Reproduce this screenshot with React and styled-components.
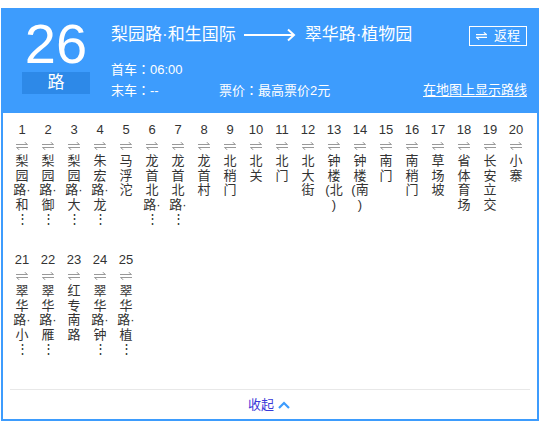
import React from 'react';
import styled, { createGlobalStyle } from 'styled-components';

const Global = createGlobalStyle`
  html, body { background: #fff; }
  body {
    margin: 8px 1px;
    font-family: "Liberation Sans", "Noto Sans CJK SC", sans-serif;
  }
`;

const Card = styled.div`
  box-sizing: border-box;
  width: 538px;
  height: 413px;
  border: 2px solid #3d9cfd;
  display: flex;
  flex-direction: column;
`;

const Header = styled.div`
  height: 103px;
  background: #3d9cfd;
  color: #fff;
  display: flex;
  padding: 6px 10px 0 19px;
  box-sizing: border-box;
`;

const NumBlock = styled.div`
  width: 68px;
  display: flex;
  flex-direction: column;
  align-items: center;
`;

const BigNum = styled.div`
  font-size: 56px;
  line-height: 48px;
  height: 48px;
  margin-top: 4px;
`;

const LuBox = styled.div`
  width: 68px;
  height: 22px;
  margin-top: 4px;
  background: #2d89e8;
  font-size: 17px;
  line-height: 22px;
  text-align: center;
`;

const Info = styled.div`
  flex: 1;
  margin-left: 21px;
  padding-top: 7px;
  display: flex;
  flex-direction: column;
`;

const TitleRow = styled.div`
  display: flex;
  align-items: center;
  height: 24px;
  font-size: 17px;
  line-height: 24px;
`;

const Arrow = styled.svg`
  margin: 0 9px 0 8px;
  display: block;
`;

const BackBtn = styled.div`
  margin-left: auto;
  width: 58px;
  height: 20px;
  box-sizing: border-box;
  border: 1px solid #fff;
  display: flex;
  align-items: center;
  justify-content: center;
  gap: 7px;
  font-size: 13px;
  line-height: 18px;
  margin-top: 2px;
`;

const MetaRow = styled.div`
  display: flex;
  align-items: center;
  height: 20px;
  font-size: 13px;
  line-height: 20px;
  margin-top: ${p => p.$top}px;
`;

const MetaCell = styled.span`
  width: ${p => (p.$w ? `${p.$w}px` : 'auto')};
  flex: none;
`;

const Colon = styled.span`
  font-family: "Noto Sans CJK TC", sans-serif;
`;

const MapLink = styled.a`
  margin-left: auto;
  color: #fff;
  text-decoration: underline;
  text-underline-offset: 2px;
  cursor: pointer;
`;

const StationList = styled.div`
  display: flex;
  flex-wrap: wrap;
  padding: 9px 0 7px 6px;
  align-content: flex-start;
  flex: 1;
`;

const Station = styled.div`
  width: 26px;
  height: 130px;
  display: flex;
  flex-direction: column;
  align-items: center;
  color: #333;
`;

const StationNo = styled.div`
  font-size: 13px;
  line-height: 15px;
  color: #333;
`;

const Swap = styled.svg`
  display: block;
  margin-top: 5px;
`;

const NameLines = styled.div`
  margin-top: 4px;
  display: flex;
  flex-direction: column;
  align-items: center;
`;

const NameLine = styled.div`
  font-size: 13px;
  line-height: 14.6px;
  white-space: nowrap;
  font-family: "Liberation Sans", "Noto Sans CJK SC", sans-serif;
`;

const Divider = styled.div`
  height: 1px;
  background: #e8e8e8;
  margin: 0 7px;
`;

const Footer = styled.div`
  height: 29px;
  display: flex;
  align-items: center;
  justify-content: center;
  gap: 4px;
  padding-right: 2px;
`;

const Collapse = styled.span`
  font-size: 13px;
  line-height: 18px;
  color: #3a3ad8;
  cursor: pointer;
`;

const SwapIcon = ({ color = '#999' }) => (
  <Swap width="12" height="8" viewBox="0 0 12 8">
    <path d="M0 2.5 H11.5 L8.5 0" fill="none" stroke={color} strokeWidth="1" />
    <path d="M12 5.5 H0.5 L3.5 8" fill="none" stroke={color} strokeWidth="1" />
  </Swap>
);

const stations = [
  ['梨', '园', '路·', '和', '⋮'],
  ['梨', '园', '路·', '御', '⋮'],
  ['梨', '园', '路·', '大', '⋮'],
  ['朱', '宏', '路·', '龙', '⋮'],
  ['马', '浮', '沱'],
  ['龙', '首', '北', '路·', '⋮'],
  ['龙', '首', '北', '路·', '⋮'],
  ['龙', '首', '村'],
  ['北', '稍', '门'],
  ['北', '关'],
  ['北', '门'],
  ['北', '大', '街'],
  ['钟', '楼', '(北', ')'],
  ['钟', '楼', '(南', ')'],
  ['南', '门'],
  ['南', '稍', '门'],
  ['草', '场', '坡'],
  ['省', '体', '育', '场'],
  ['长', '安', '立', '交'],
  ['小', '寨'],
  ['翠', '华', '路·', '小', '⋮'],
  ['翠', '华', '路·', '雁', '⋮'],
  ['红', '专', '南', '路'],
  ['翠', '华', '路·', '钟', '⋮'],
  ['翠', '华', '路·', '植', '⋮'],
];

export default function App() {
  return (
    <>
      <Global />
      <Card>
        <Header>
          <NumBlock>
            <BigNum>26</BigNum>
            <LuBox>路</LuBox>
          </NumBlock>
          <Info>
            <TitleRow>
              <span>梨园路·和生国际</span>
              <Arrow width="52" height="14" viewBox="0 0 52 14">
                <path d="M0 7 H50" stroke="#fff" strokeWidth="2" />
                <path d="M44 1.5 L50 7 L44 12.5" fill="none" stroke="#fff" strokeWidth="2" />
              </Arrow>
              <span>翠华路·植物园</span>
              <BackBtn>
                <svg width="11" height="8" viewBox="0 0 12 8" style={{ display: 'block' }}>
                  <path d="M0 2.5 H11.5 L8.5 0" fill="none" stroke="#fff" strokeWidth="1.2" />
                  <path d="M12 5.5 H0.5 L3.5 8" fill="none" stroke="#fff" strokeWidth="1.2" />
                </svg>
                <span>返程</span>
              </BackBtn>
            </TitleRow>
            <MetaRow $top={12}>
              <MetaCell>首车<Colon>：</Colon>06:00</MetaCell>
            </MetaRow>
            <MetaRow $top={1}>
              <MetaCell $w={108}>末车<Colon>：</Colon>--</MetaCell>
              <MetaCell>票价<Colon>：</Colon>最高票价2元</MetaCell>
              <MapLink>在地图上显示路线</MapLink>
            </MetaRow>
          </Info>
        </Header>
        <StationList>
          {stations.map((lines, i) => (
            <Station key={i}>
              <StationNo>{i + 1}</StationNo>
              <SwapIcon />
              <NameLines>
                {lines.map((l, j) => (
                  <NameLine key={j}>{l}</NameLine>
                ))}
              </NameLines>
            </Station>
          ))}
        </StationList>
        <Divider />
        <Footer>
          <Collapse>收起</Collapse>
          <svg width="12" height="8" viewBox="0 0 12 8" style={{ display: 'block' }}>
            <path d="M1 7 L6 2 L11 7" fill="none" stroke="#3d9cfd" strokeWidth="2.2" />
          </svg>
        </Footer>
      </Card>
    </>
  );
}
